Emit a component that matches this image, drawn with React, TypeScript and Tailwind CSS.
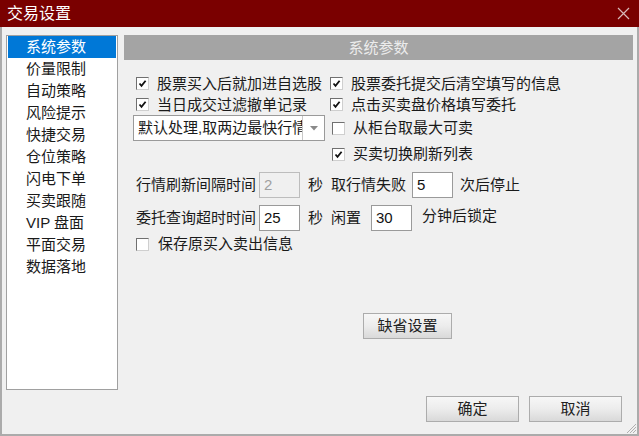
import React from 'react';

const FONT = { fontFamily: '"Liberation Sans", "Noto Sans CJK SC", sans-serif' };

const menuItems = ['系统参数', '价量限制', '自动策略', '风险提示', '快捷交易', '仓位策略', '闪电下单', '买卖跟随', 'VIP 盘面', '平面交易', '数据落地'];

const CheckBox: React.FC<{ checked?: boolean }> = ({ checked }) => (
    <span className="w-[13px] h-[13px] shrink-0 bg-white border border-t-[#707070] border-l-[#707070] border-r-[#cfcfcf] border-b-[#cfcfcf] flex items-center justify-center">
        {checked && (
            <svg width="9" height="9" viewBox="0 0 9 9">
                <path d="M1.5 4.5 L3.5 6.8 L7.6 1.8" fill="none" stroke="#111" strokeWidth="1.8" />
            </svg>
        )}
    </span>
);

const Option: React.FC<{ label: string; checked?: boolean; className?: string }> = ({ label, checked, className = '' }) => (
    <label className={`flex items-center gap-[8px] whitespace-nowrap ${className}`}>
        <CheckBox checked={checked} />
        <span>{label}</span>
    </label>
);

const NumBox: React.FC<{ value: string; disabled?: boolean; className?: string }> = ({ value, disabled, className = '' }) => (
    <div
        className={`h-[26px] w-[41px] shrink-0 border flex items-center pl-[4px] text-[15px] ${
            disabled ? 'bg-[#f0f0f0] border-[#bdbdbd] text-[#a0a0a0]' : 'bg-white border-[#9a9a9a] text-[#111]'
        } ${className}`}
    >
        {value}
    </div>
);

const Button: React.FC<{ label: string; className?: string }> = ({ label, className = '' }) => (
    <button className={`h-[26px] border border-[#acacac] bg-gradient-to-b from-[#f7f7f7] via-[#ececec] to-[#d9d9d9] text-[15px] text-[#222] flex items-center justify-center ${className}`}>
        {label}
    </button>
);

export default function App() {
    return (
        <div className="w-[639px] h-[436px] flex flex-col bg-[#f0f0f0] text-[15px] leading-[20px] text-[#1a1a1a] relative overflow-hidden" style={FONT}>
            {/* title bar */}
            <div className="h-[27px] shrink-0 bg-[#7a0000] flex items-center justify-between pl-[7px] pr-[9px]">
                <span className="text-white text-[16px]">交易设置</span>
                <svg width="13" height="13" viewBox="0 0 13 13">
                    <path d="M1 1 L12 12 M12 1 L1 12" stroke="#d8b8b8" strokeWidth="1.2" />
                </svg>
            </div>

            <div className="flex-1 flex border-x-2 border-b-2 border-[#ababab] pt-[8px] px-[4px]">
                {/* left menu */}
                <div className="w-[112px] h-[355px] shrink-0 bg-white border border-[#a0a0a0] pt-[0px] px-[1px]">
                    {menuItems.map((m, i) => (
                        <div
                            key={m}
                            className={`h-[22px] flex items-center pl-[18px] whitespace-nowrap ${i === 0 ? 'bg-[#0078d7] text-white' : 'text-[#1a1a1a]'}`}
                        >
                            {m}
                        </div>
                    ))}
                </div>

                {/* right panel */}
                <div className="flex-1 ml-[6px] flex flex-col">
                    <div className="h-[25px] shrink-0 bg-[#a4a4a4] text-[#ececec] flex items-center justify-center">系统参数</div>

                    <div className="grid grid-cols-[197px_1fr] grid-rows-[21px_21px_26px_26px] mt-[13px] pl-[9px] items-center">
                        <Option label="股票买入后就加进自选股" checked className="pl-[3px]" />
                        <Option label="股票委托提交后清空填写的信息" checked />
                        <Option label="当日成交过滤撤单记录" checked className="pl-[3px]" />
                        <Option label="点击买卖盘价格填写委托" checked />
                        <div className="w-[192px] h-[26px] bg-white border border-[#9a9a9a] flex items-center">
                            <div className="flex-1 overflow-hidden whitespace-nowrap pl-[4px]">默认处理,取两边最快行情</div>
                            <div className="w-[22px] h-full border-l border-[#c8c8c8] flex items-center justify-center">
                                <svg width="8" height="5" viewBox="0 0 8 5">
                                    <path d="M0 0 L8 0 L4 4.5 Z" fill="#8a8a8a" />
                                </svg>
                            </div>
                        </div>
                        <Option label="从柜台取最大可卖" className="pl-[2px]" />
                        <div />
                        <Option label="买卖切换刷新列表" checked className="pl-[2px]" />
                    </div>

                    <div className="flex items-center mt-[5px] pl-[12px] whitespace-nowrap">
                        <span className="w-[123px]">行情刷新间隔时间</span>
                        <NumBox value="2" disabled />
                        <span className="ml-[8px] w-[23px]">秒</span>
                        <span className="w-[81px]">取行情失败</span>
                        <NumBox value="5" />
                        <span className="ml-[7px]">次后停止</span>
                    </div>
                    <div className="flex items-center mt-[7px] pl-[12px] whitespace-nowrap">
                        <span className="w-[123px]">委托查询超时时间</span>
                        <NumBox value="25" />
                        <span className="ml-[8px] w-[23px]">秒</span>
                        <span className="w-[40px]">闲置</span>
                        <NumBox value="30" />
                        <span className="ml-[10px] -mt-[4px]">分钟后锁定</span>
                    </div>
                    <Option label="保存原买入卖出信息" className="mt-[3px] pl-[12px] h-[20px] gap-[9px]" />

                    <div className="pl-[239px] mt-[59px]">
                        <Button label="缺省设置" className="w-[89px] h-[25px]" />
                    </div>

                    <div className="flex-1" />
                    <div className="flex justify-end gap-[10px] pr-[11px] mb-[12px]">
                        <Button label="确定" className="w-[93px]" />
                        <Button label="取消" className="w-[93px]" />
                    </div>
                </div>
            </div>

            {/* resize grip */}
            <svg className="absolute right-[2px] bottom-[2px]" width="12" height="12" viewBox="0 0 12 12">
                <path d="M11 2 L2 11 M11 5 L5 11 M11 8 L8 11" stroke="#b0b0b0" strokeWidth="1" />
            </svg>
        </div>
    );
}
